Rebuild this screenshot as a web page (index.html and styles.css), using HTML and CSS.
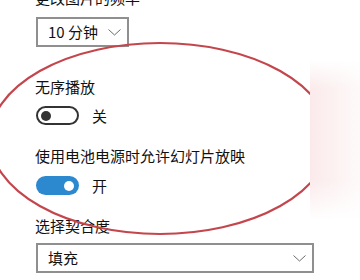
FILE: index.html
```html
<!DOCTYPE html>
<html lang="zh-CN">
<head>
<meta charset="utf-8">
<link rel="stylesheet" href="styles.css">
</head>
<body>
<div class="page">
  <div class="label label-top">更改图片的频率</div>
  <div class="select select-small">
    <span class="select-text">10 分钟</span>
    <svg class="chev" width="13" height="7" viewBox="0 0 13 7"><polyline points="0.5,0.5 6.5,6 12.5,0.5" fill="none" stroke="#6b6b6b" stroke-width="1"/></svg>
  </div>

  <div class="label label-1">无序播放</div>
  <div class="toggle-row">
    <span class="toggle toggle-off"><span class="knob"></span></span>
    <span class="toggle-text">关</span>
  </div>

  <div class="label label-2">使用电池电源时允许幻灯片放映</div>
  <div class="toggle-row toggle-row-2">
    <span class="toggle toggle-on"><span class="knob"></span></span>
    <span class="toggle-text">开</span>
  </div>

  <div class="label label-3">选择契合度</div>
  <div class="select select-wide">
    <span class="select-text">填充</span>
    <svg class="chev" width="13" height="7" viewBox="0 0 13 7"><polyline points="0.5,0.5 6.5,6 12.5,0.5" fill="none" stroke="#6b6b6b" stroke-width="1"/></svg>
  </div>

  <svg class="mark" width="360" height="280" viewBox="0 0 360 280">
    <ellipse cx="160" cy="138.5" rx="170" ry="95.5" fill="none" stroke="#c4464d" stroke-width="2.2"/>
  </svg>
  <div class="haze"></div>
</div>
</body>
</html>
```

FILE: styles.css
```css
html, body {
  margin: 0;
  padding: 0;
  background: #ffffff;
}

.page {
  position: relative;
  width: 360px;
  height: 280px;
  overflow: hidden;
  padding-left: 35px;
  box-sizing: border-box;
  font-family: "Noto Sans CJK SC", "Noto Sans", sans-serif;
  font-size: 15px;
  color: #111111;
}

.label {
  line-height: 20px;
  height: 20px;
  white-space: nowrap;
}

.label-top {
  margin-top: -12px;
}

.select {
  display: flex;
  align-items: center;
  justify-content: space-between;
  box-sizing: border-box;
  height: 30px;
  border: 2px solid #8f8f8f;
  margin-left: 1px;
  padding: 0 6px 0 10px;
  background: #ffffff;
}

.select-text {
  line-height: 20px;
  margin-top: -1px;
}

.select-small {
  width: 93px;
  margin-top: 9px;
}

.select-wide {
  width: 278px;
  margin-top: 7px;
}

.chev {
  display: block;
  margin-top: 1px;
}

.label-1 {
  margin-top: 30px;
}

.toggle-row {
  display: flex;
  align-items: center;
  gap: 13px;
  margin-top: 9px;
  margin-left: 1px;
  height: 19px;
}

.toggle-row-2 {
  margin-top: 10px;
}

.toggle {
  position: relative;
  box-sizing: border-box;
  width: 43px;
  height: 19px;
  border-radius: 10px;
  display: block;
}

.toggle-off {
  border: 2px solid #333333;
}

.toggle-on {
  background: #2d89cf;
}

.knob {
  position: absolute;
  top: 50%;
  width: 10px;
  height: 10px;
  margin-top: -5px;
  border-radius: 50%;
}

.toggle-off .knob {
  left: 3px;
  background: #333333;
}

.toggle-on .knob {
  right: 5px;
  background: #ffffff;
}

.toggle-text {
  line-height: 20px;
}

.label-2 {
  margin-top: 21px;
}

.label-3 {
  margin-top: 21px;
}

.mark {
  position: absolute;
  left: 0;
  top: 0;
  pointer-events: none;
}

.haze {
  position: absolute;
  left: 310px;
  top: 60px;
  width: 50px;
  height: 160px;
  background:
    linear-gradient(to bottom, rgba(255,255,255,1) 0%, rgba(255,255,255,0) 18%, rgba(255,255,255,0) 75%, rgba(255,255,255,1) 100%),
    linear-gradient(to right, #fbeaeb 0%, #fcf1f1 45%, #fefafa 100%);
}
```
